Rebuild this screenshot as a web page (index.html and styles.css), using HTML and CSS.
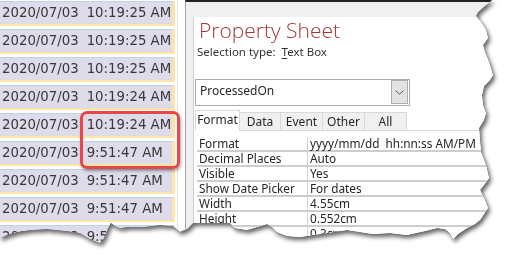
FILE: index.html
```html
<!DOCTYPE html>
<html lang="en">
<head>
    <meta charset="UTF-8">
    <title>Property Sheet</title>
    <link rel="stylesheet" href="styles.css">
</head>
<body>
    <div class="shot">
        <div class="tear">
            <!-- datasheet column on the left -->
            <div class="records">
                <div class="rec"><span class="d">2020/07/03</span><span class="t">10:19:25 AM</span></div>
                <div class="rec"><span class="d">2020/07/03</span><span class="t">10:19:25 AM</span></div>
                <div class="rec"><span class="d">2020/07/03</span><span class="t">10:19:25 AM</span></div>
                <div class="rec"><span class="d">2020/07/03</span><span class="t">10:19:24 AM</span></div>
                <div class="rec"><span class="d">2020/07/03</span><span class="t">10:19:24 AM</span></div>
                <div class="rec"><span class="d">2020/07/03</span><span class="t">9:51:47 AM</span></div>
                <div class="rec"><span class="d">2020/07/03</span><span class="t">9:51:47 AM</span></div>
                <div class="rec"><span class="d">2020/07/03</span><span class="t">9:51:47 AM</span></div>
                <div class="rec"><span class="d">2020/07/03</span><span class="t">9:51:47 AM</span></div>
                <div class="mark"></div>
            </div>

            <!-- property sheet pane -->
            <div class="pane">
                <div class="sheet">
                    <h1>Property Sheet</h1>
                    <p class="sel">Selection type:&nbsp; <u>T</u>ext Box</p>
                    <div class="combo">
                        <span class="combo-text">ProcessedOn</span>
                        <span class="drop">
                            <svg width="9" height="5" viewBox="0 0 9 5"><path d="M0.5 0.5 L4.5 4.2 L8.5 0.5" fill="none" stroke="#555" stroke-width="1"/></svg>
                        </span>
                    </div>
                    <ul class="tabs">
                        <li class="tab on">Format</li>
                        <li class="tab w41">Data</li>
                        <li class="tab">Event</li>
                        <li class="tab">Other</li>
                        <li class="tab">All</li>
                    </ul>
                    <div class="props">
                        <div class="prop"><span class="k">Format</span><span class="v">yyyy/mm/dd&nbsp; hh:nn:ss AM/PM</span></div>
                        <div class="prop"><span class="k">Decimal Places</span><span class="v">Auto</span></div>
                        <div class="prop"><span class="k">Visible</span><span class="v">Yes</span></div>
                        <div class="prop"><span class="k">Show Date Picker</span><span class="v">For dates</span></div>
                        <div class="prop"><span class="k">Width</span><span class="v">4.55cm</span></div>
                        <div class="prop"><span class="k">Height</span><span class="v">0.552cm</span></div>
                        <div class="prop"><span class="k">Top</span><span class="v">0.3cm</span></div>
                    </div>
                </div>
            </div>
        </div>
    </div>
</body>
</html>
```

FILE: styles.css
```css
* {
    box-sizing: border-box;
}
body {
    margin: 0;
    background: #fff;
    overflow: hidden;
}
.shot {
    width: 513px;
    height: 259px;
    filter: drop-shadow(0 0 0.7px #000) drop-shadow(2px 3px 2px rgba(0, 0, 0, 0.6));
}
.tear {
    display: flex;
    width: 513px;
    height: 259px;
    background: #fff;
    clip-path: polygon(0 0, 492px 0, 486px 5px, 478px 12px, 476px 16px, 481px 22px, 486px 30px, 488px 38px, 483px 45px, 485px 52px, 489px 62px, 493px 75px, 490px 80px, 484px 86px, 482px 95px, 483px 105px, 486px 113px, 484px 120px, 479px 128px, 480px 140px, 481px 152px, 486px 165px, 489px 178px, 484px 185px, 480px 190px, 484px 198px, 488px 208px, 484px 214px, 480px 220px, 475px 224px, 467px 228px, 458px 234px, 453px 239px, 450px 233px, 445px 229px, 437px 228px, 425px 231px, 407px 235px, 390px 233px, 373px 234px, 360px 232px, 347px 230px, 327px 233px, 313px 235px, 300px 237px, 287px 236px, 277px 232px, 272px 227px, 267px 224px, 257px 227px, 247px 230px, 235px 228px, 230px 223px, 213px 223px, 200px 223px, 193px 223px, 187px 229px, 180px 232px, 173px 226px, 160px 225px, 143px 227px, 127px 227px, 120px 228px, 115px 226px, 111px 223px, 108px 228px, 104px 238px, 100px 243px, 90px 239px, 80px 233px, 67px 231px, 47px 229px, 30px 230px, 17px 232px, 7px 235px, 0 238px);
}

/* datasheet */
.records {
    position: relative;
    flex-shrink: 0;
    width: 178px;
    margin-right: 7px;
    padding-top: 1px;
    border-right: 1px solid #d6e9cf;
    display: flex;
    flex-direction: column;
    gap: 3px;
    font-family: "DejaVu Sans", sans-serif;
    font-size: 13.3px;
    color: #383838;
}
.rec {
    flex-shrink: 0;
    width: 175px;
    height: 25px;
    line-height: 22px;
    padding-left: 2px;
    white-space: nowrap;
    background: #dedbea;
    border-top: 1px solid #b9d5ee;
    border-right: 3px solid #fde6a3;
    border-bottom: 2px solid #fde6a3;
}
.rec .t {
    margin-left: 8px;
}
.mark {
    position: absolute;
    left: 80px;
    top: 111px;
    width: 100px;
    height: 58px;
    border: 3px solid #e9464a;
    border-radius: 7px;
    box-shadow: 1px 2px 3px rgba(0, 0, 0, 0.35);
}

/* property sheet */
.pane {
    flex: 1;
    background: #f0f0f0;
    border-left: 1px solid #a3a3a3;
    border-top: 2px solid #222;
    padding: 11px 0 0 7px;
    font-family: "Segoe UI", "Noto Sans", sans-serif;
    color: #262626;
}
.sheet {
    height: 100%;
    background: #fff;
    border-left: 1px solid #cfcfcf;
    padding-left: 1px;
}
.sheet h1 {
    margin: 4px 0 0 4px;
    font-family: "Open Sans", sans-serif;
    font-size: 21px;
    font-weight: 300;
    line-height: 26px;
    color: #a4373a;
}
.sel {
    margin: 1px 0 0 2px;
    font-size: 11.5px;
    line-height: 16px;
    color: #333;
}
.sel u {
    text-underline-offset: 2px;
}
.combo {
    display: flex;
    width: 215px;
    height: 27px;
    margin-top: 19px;
    border: 1px solid #acacac;
    padding: 4px 1px 0 4px;
    font-size: 12px;
}
.combo-text {
    line-height: 14px;
}
.drop {
    display: flex;
    align-items: center;
    justify-content: center;
    width: 17px;
    height: 24px;
    margin: -4px 0 0 auto;
    background: #e3e3e3;
    border: 1px solid #adadad;
}
.tabs {
    display: flex;
    align-items: flex-end;
    height: 21px;
    margin: 4px 0 0 0;
    padding: 0;
    list-style: none;
    border-bottom: 1px solid #d9d9d9;
    font-size: 12px;
}
.tab {
    width: 43px;
    height: 19px;
    margin-left: -1px;
    margin-bottom: -1px;
    background: #f0f0f0;
    border: 1px solid #d9d9d9;
    text-align: center;
    line-height: 18px;
}
.tab.w41 {
    width: 42px;
}
.tab.on {
    width: 45px;
    height: 21px;
    margin-left: 0;
    background: #fff;
    border-bottom-color: #fff;
    line-height: 17px;
}
.props {
    margin: 6px 0 0 2px;
    font-size: 11.8px;
}
.prop {
    display: grid;
    grid-template-columns: 111px 1fr;
    height: 15px;
    line-height: 13px;
    border-bottom: 2px solid #cdcdcd;
    white-space: nowrap;
}
.prop .k {
    padding-left: 2px;
    border-right: 1px solid #d2d2d2;
}
.prop .v {
    padding-left: 2px;
}
```
